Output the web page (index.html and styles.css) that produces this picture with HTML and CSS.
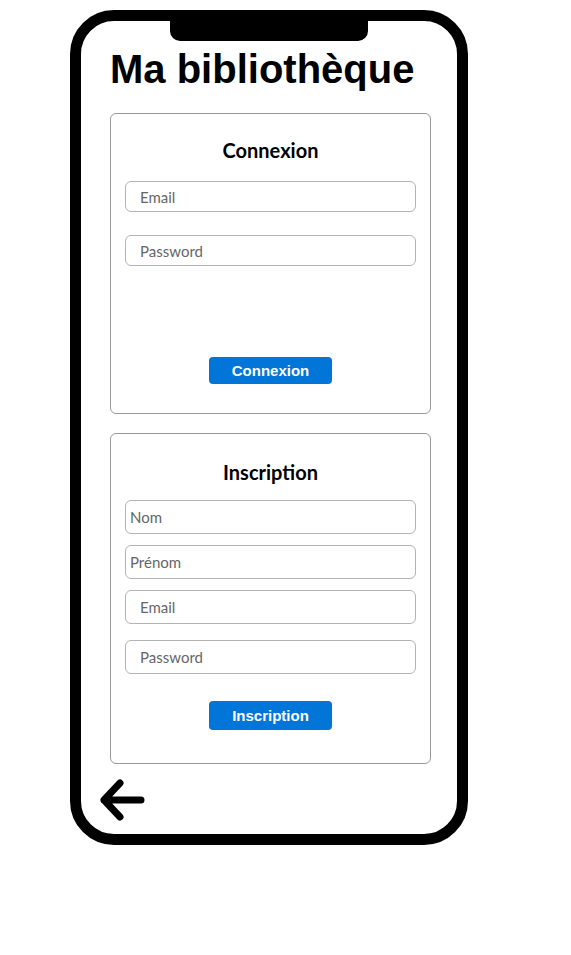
FILE: index.html
```html
<!DOCTYPE html>
<html lang="fr">
<head>
<meta charset="utf-8">
<title>Ma bibliothèque</title>
<link rel="stylesheet" href="styles.css">
</head>
<body>
<div class="phone">
  <div class="notch"></div>
  <h1 class="title">Ma bibliothèque</h1>
  <form class="card card-login">
    <h2 class="card-title">Connexion</h2>
    <input class="field field-pad" type="email" placeholder="Email">
    <input class="field field-pad field-gap-lg" type="password" placeholder="Password">
    <div class="actions actions-login">
      <button class="btn btn-login" type="button">Connexion</button>
    </div>
  </form>
  <form class="card card-signup">
    <h2 class="card-title">Inscription</h2>
    <input class="field field-tall field-tight" type="text" placeholder="Nom">
    <input class="field field-tall field-tight field-gap-sm" type="text" placeholder="Prénom">
    <input class="field field-tall field-pad field-gap-sm" type="email" placeholder="Email">
    <input class="field field-tall field-pad field-gap-md" type="password" placeholder="Password">
    <div class="actions actions-signup">
      <button class="btn btn-signup" type="button">Inscription</button>
    </div>
  </form>
  <div class="back">
    <svg width="46" height="44" viewBox="0 0 46 44" aria-hidden="true">
      <path d="M4 21 H41 M20 4 L4 21 L20 38" fill="none" stroke="#000" stroke-width="7" stroke-linecap="round" stroke-linejoin="round"/>
    </svg>
  </div>
</div>
</body>
</html>
```

FILE: styles.css
```css
html, body {
  margin: 0;
  padding: 0;
  background: #fff;
}

.phone {
  position: relative;
  box-sizing: border-box;
  margin: 10px 0 0 70px;
  width: 398px;
  height: 835px;
  border: 11px solid #000;
  border-radius: 44px;
  padding: 25px 26px 0 29px;
  display: flex;
  flex-direction: column;
  align-items: stretch;
}

.notch {
  position: absolute;
  top: -1px;
  left: 89px;
  width: 198px;
  height: 21px;
  background: #000;
  border-radius: 0 0 10px 10px;
}

.title {
  margin: 0;
  font-family: "Liberation Sans", Arial, sans-serif;
  font-weight: 700;
  font-size: 40px;
  line-height: 46px;
  color: #000;
}

.card {
  box-sizing: border-box;
  margin: 21px 0 0 0;
  width: 321px;
  border: 1px solid #999;
  border-radius: 6px;
  padding: 24px 14px 29px 14px;
  display: flex;
  flex-direction: column;
}

.card-signup {
  margin-top: 19px;
  padding-top: 26px;
  padding-bottom: 33px;
}

.card-title {
  margin: 0 0 19px 0;
  text-align: center;
  font-family: "Source Sans Pro", Lato, "Open Sans", sans-serif;
  font-weight: 700;
  font-size: 20px;
  line-height: 24px;
  color: #000;
}

.card-signup .card-title {
  margin-bottom: 16px;
}

.field {
  box-sizing: border-box;
  display: block;
  width: 291px;
  height: 31px;
  margin: 0;
  border: 1px solid #b3b3b3;
  border-radius: 6px;
  padding: 0 4px;
  font-family: "Source Sans Pro", Lato, "Open Sans", sans-serif;
  font-size: 15px;
  color: #333;
  background: #fff;
  outline: none;
}

.field::placeholder {
  color: #666;
  opacity: 1;
}

.field-pad {
  padding-left: 14px;
}

.field-tall {
  height: 34px;
}

.field-gap-sm {
  margin-top: 11px;
}

.field-gap-md {
  margin-top: 16px;
}

.field-gap-lg {
  margin-top: 23px;
}

.actions {
  display: flex;
  justify-content: center;
}

.actions-login {
  margin-top: 91px;
}

.actions-signup {
  margin-top: 27px;
}

.btn {
  box-sizing: border-box;
  width: 123px;
  height: 27px;
  border: none;
  border-radius: 4px;
  background: #0275d8;
  color: #fff;
  font-family: "Liberation Sans", Arial, sans-serif;
  font-weight: 700;
  font-size: 15px;
  padding: 0;
  cursor: pointer;
}

.btn-signup {
  height: 29px;
}

.back {
  margin: 15px 0 0 -10px;
  width: 46px;
  height: 44px;
}

.back svg {
  display: block;
}
```
